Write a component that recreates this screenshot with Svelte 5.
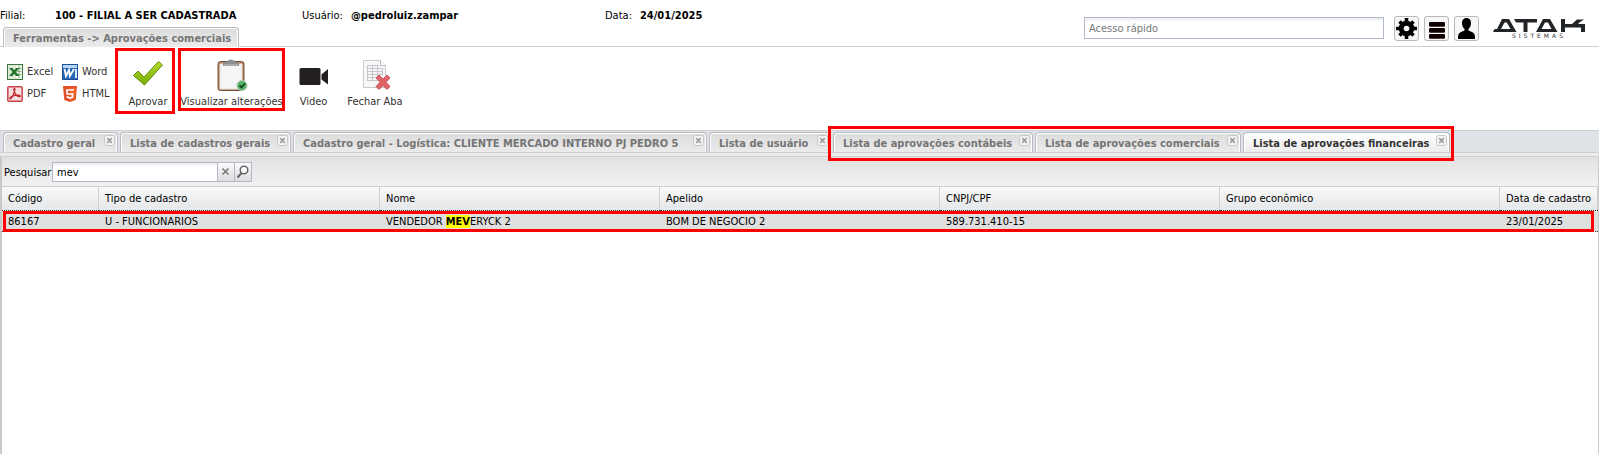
<script>
  const formats = [
    { kind: 'excel', label: 'Excel' },
    { kind: 'word', label: 'Word' },
    { kind: 'pdf', label: 'PDF' },
    { kind: 'html', label: 'HTML' }
  ];

  const tabs = [
    { title: 'Cadastro geral' },
    { title: 'Lista de cadastros gerais' },
    { title: 'Cadastro geral - Logística: CLIENTE MERCADO INTERNO PJ PEDRO 5' },
    { title: 'Lista de usuário' },
    { title: 'Lista de aprovações contábeis' },
    { title: 'Lista de aprovações comerciais' },
    { title: 'Lista de aprovações financeiras' }
  ];
  let active = $state(6);
  let search = $state('mev');
  let quick = $state('');

  const columns = ['Código', 'Tipo de cadastro', 'Nome', 'Apelido', 'CNPJ/CPF', 'Grupo econômico', 'Data de cadastro'];
</script>

{#snippet closeIcon()}
  <svg width="11" height="11" viewBox="0 0 11 11" aria-hidden="true">
    <rect x=".5" y=".5" width="10" height="10" rx="2" fill="#f3f3f3" stroke="#c8c8c8" />
    <path d="M3.2 3.2l4.6 4.6M7.8 3.2L3.2 7.8" stroke="#a0a0a0" stroke-width="1.7" />
  </svg>
{/snippet}

{#snippet formatIcon(kind)}
  <svg width="16" height="16" viewBox="0 0 16 16" aria-hidden="true">
    {#if kind === 'excel'}
      <rect x=".5" y=".5" width="15" height="15" fill="#dcebd6" stroke="#40763f" />
      <path d="M9 2h5v12H9z" fill="#fff" /><path d="M10 4.5h4M10 7.5h4M10 10.500h4M12 2v12" stroke="#7daa78" />
      <path d="M2 4h3.500l1.800 2.300L9 4h3.500L9 8l3.500 4H9L7.200 9.800 5.500 12H2l3.500-4z" fill="#25742c" />
    {:else if kind === 'word'}
      <rect x=".5" y=".5" width="15" height="15" fill="#2568b4" stroke="#1c4f96" />
      <path d="M1 1h14v3H1z" fill="#b8d5f2" /><path d="M13 5h2v9h-2z" fill="#d7e7f8" />
      <path d="M2.500 5l1.500 7 3-6 .8 6L12 5" fill="none" stroke="#fff" stroke-width="1.800" />
    {:else if kind === 'pdf'}
      <rect x=".8" y=".8" width="14.400" height="14.400" rx="1" fill="#f8dedc" stroke="#c9444a" stroke-width="1.500" />
      <path d="M7.500 2.500c-.9 0-.6 2 .2 4 .8 2 2.800 4 4.800 4.200 1.600 0 .6-1.700-1.500-1.600-3 .1-6.500 1.200-7.800 2.500-1.200 1.300.3 1.700 1.500 0C6.500 9.300 8.700 2.500 7.500 2.500z" fill="none" stroke="#c02c32" stroke-width="1.300" />
    {:else}
      <path d="M1 0h14l-1.300 14L8 16l-5.700-2z" fill="#e34f26" /><path d="M8 1.200h5.700l-1.100 12L8 14.700z" fill="#ef652a" />
      <path d="M12 4H4.800l.4 4h5.500l-.3 3.200-2.400.8-2.400-.8-.1-1.200" fill="none" stroke="#fff" stroke-width="1.700" />
    {/if}
  </svg>
{/snippet}

<div class="app">
  <header>
    <dl>
      <div><dt>Filial:</dt><dd>100 - FILIAL A SER CADASTRADA</dd></div>
      <div><dt>Usuário:</dt><dd>@pedroluiz.zampar</dd></div>
      <div><dt>Data:</dt><dd>24/01/2025</dd></div>
    </dl>
    <div class="quick">
      <input type="text" aria-label="Acesso rápido" placeholder="Acesso rápido" bind:value={quick} />
      <button aria-label="Configurações">
        <svg width="21" height="21" viewBox="0 0 21 21">
          <path d="M10.500 0v21M0 10.500h21M3.500 3.500l14 14M17.500 3.500l-14 14" stroke="#000" stroke-width="3.600" />
          <circle cx="10.500" cy="10.500" r="5.300" fill="none" stroke="#000" stroke-width="5" /><circle cx="10.500" cy="10.500" r="2.800" fill="#f7f7f7" />
        </svg>
      </button>
      <button aria-label="Menu">
        <svg width="21" height="21" viewBox="0 0 21 21">
          <g fill="#100000"><rect x="3" y="4" width="16" height="4.800" rx="1.200" /><rect x="3" y="10" width="16" height="4.800" rx="1.200" /><rect x="3" y="16" width="16" height="4.800" rx="1.200" /></g>
        </svg>
      </button>
      <button aria-label="Conta">
        <svg width="21" height="21" viewBox="0 0 21 21">
          <path d="M10.500 0C7.300 0 6 2.400 6 5c0 2.800 1.200 5 2.500 6v1.500C5.500 13.800 2 14.500 2 19v2h17v-2c0-4.500-3.500-5.200-6.500-6.500V11C13.800 10 15 7.800 15 5c0-2.600-1.300-5-4.500-5z" fill="#000" />
        </svg>
      </button>
      <div class="logo">
        <svg width="92" height="13" viewBox="0 0 92 13" role="img" aria-label="Atak">
          <g fill="#222528">
            <path fill-rule="evenodd" d="M9 0h7l7.500 13H0l1.500-3H4zM11.500 3.500L8 10h9.500l-3.700-6.500z" />
            <path d="M21 0h23v3.500h-9.500V13h-4V3.500H23z" />
            <path fill-rule="evenodd" d="M50 0h7l7.500 13H43zM52 3.500L48.500 10h10L55 3.500z" />
            <path d="M68 0h4v5h7l5-4.500h7L87 3l-2 2h7v8h-4V8.500H72V13h-4z" />
          </g>
        </svg>
        <span>SISTEMAS</span>
      </div>
    </div>
  </header>

  <nav class="crumb"><a href="#aprovacoes">Ferramentas -&gt; Aprovações comerciais</a></nav>

  <section class="tools" aria-label="Ferramentas">
    <div class="formats">
      {#each formats as f}
        <button>{@render formatIcon(f.kind)}{f.label}</button>
      {/each}
    </div>
    <button class="tool marked approve">
      <svg width="32" height="32" viewBox="0 0 32 32" aria-hidden="true">
        <defs><linearGradient id="g" x2="0" y2="1"><stop stop-color="#b5dc2b" /><stop offset="1" stop-color="#76ad00" /></linearGradient></defs>
        <path d="M1.500 16.500L6 12l6 6L26.500 2.500 30.500 6 12.500 26z" fill="url(#g)" stroke="#648d16" />
      </svg>
      Aprovar
    </button>
    <button class="tool marked view">
      <svg width="32" height="32" viewBox="0 0 32 32" aria-hidden="true">
        <rect x="2" y="2.500" width="26" height="29" rx="2.500" fill="#b98360" stroke="#71503b" />
        <path d="M4 5h22v25H4z" fill="#f5f5f6" stroke="#dcdcdc" />
        <path d="M7 7V3.500l4-.5c.5-3.500 7.500-3.500 8 0l4 .5V7z" fill="#8b8f90" /><path d="M8 6h14" stroke="#c2c5c6" />
        <circle cx="26" cy="26.500" r="5" fill="#57b267" stroke="#b5c8b8" /><path d="M23.500 26.500l2 2 3.500-4" fill="none" stroke="#12461b" stroke-width="1.800" />
      </svg>
      Visualizar alterações
    </button>
    <button class="tool video">
      <svg width="32" height="32" viewBox="0 0 32 32" aria-hidden="true">
        <rect x="1.500" y="9" width="21" height="17" rx="1.500" fill="#231f20" /><path d="M23.500 15.500L30 10v15.500l-6.500-5z" fill="#231f20" />
      </svg>
      Video
    </button>
    <button class="tool close-tab">
      <svg width="32" height="32" viewBox="0 0 32 32" aria-hidden="true">
        <path d="M4.500 1.500h17l5 5v22h-22z" fill="#f7f7f7" stroke="#cacaca" /><path d="M21.500 1.500v5h5" fill="#fff" stroke="#bbb" />
        <path d="M8 6.500h12M8 9.500h15M8 12.500h15M8 15.500h15M8 18.500h15M8 21.500h10M8.500 6v16M13.500 6v16M18.500 6v16M23.500 9v7" fill="none" stroke="#c3c6ca" />
        <path d="M20 16l4 4 4-4 3 3-4 4.200 4 4.300-3 3-4-4-4 4-3-3 4-4.300-4-4.200z" fill="#de6467" stroke="#c54449" stroke-width=".8" />
      </svg>
      Fechar Aba
    </button>
  </section>

  <div class="tabbar">
    <div class="tabs" role="tablist">
      {#each tabs as tab, i}
        <div class="tab" class:active={i === active}>
          <button role="tab" aria-selected={i === active} onclick={() => (active = i)}>{tab.title}</button>
          <button class="close" aria-label="Fechar {tab.title}">{@render closeIcon()}</button>
        </div>
      {/each}
      <span class="group"></span>
    </div>
  </div>

  <main>
    <form class="search" onsubmit={(e) => e.preventDefault()}>
      <label for="q">Pesquisar</label>
      <input id="q" type="text" bind:value={search} />
      <button type="button" aria-label="Limpar" onclick={() => (search = '')}>
        <svg width="16" height="18" viewBox="0 0 16 18"><path d="M4.500 5.500l6 6M10.500 5.500l-6 6" stroke="#777" stroke-width="1.600" /></svg>
      </button>
      <button aria-label="Buscar">
        <svg width="16" height="18" viewBox="0 0 16 18"><circle cx="9" cy="7" r="3.800" fill="#f8f8f8" stroke="#666" stroke-width="1.500" /><path d="M6.500 10L2.500 14.500" stroke="#666" stroke-width="2" /></svg>
      </button>
    </form>
    <div class="grid">
      <table>
        <colgroup><col class="code" /><col class="kind" /><col /><col /><col /><col /><col class="date" /></colgroup>
        <thead><tr>{#each columns as c}<th scope="col">{c}</th>{/each}</tr></thead>
        <tbody>
          <tr>
            <td>86167</td><td>U - FUNCIONARIOS</td><td>VENDEDOR <mark>MEV</mark>ERYCK 2</td><td>BOM DE NEGOCIO 2</td>
            <td>589.731.410-15</td><td></td><td>23/01/2025</td>
          </tr>
        </tbody>
      </table>
      <span class="rowmark"></span>
    </div>
  </main>
</div>

<style>
  :global(body) { background: #fff; }
  .app, .app * { box-sizing: border-box; }
  .app {
    display: flex; flex-direction: column; min-height: 100vh; overflow: hidden;
    font: 11px/14px "DejaVu Sans Condensed", Tahoma, "DejaVu Sans", sans-serif; color: #000;
  }
  button { font: inherit; color: inherit; background: none; border: 0; padding: 0; margin: 0; cursor: pointer; }
  input { font: inherit; border: 1px solid #b5b8c8; margin: 0; padding: 0 4px; background: linear-gradient(#e9eced, #fff 4px); }
  svg { display: block; flex: none; }

  header { display: flex; justify-content: space-between; height: 27px; }
  dl { display: grid; grid-template-columns: 302px 303px auto; margin: 9px 0 0; }
  dl div { display: flex; gap: 8px; white-space: nowrap; }
  dl div:first-child dt { width: 47px; }
  dd { margin: 0; font-weight: bold; }
  .quick { display: flex; gap: 5px; padding: 16px 14px 0 0; align-items: flex-start; }
  .quick input { width: 300px; height: 22px; margin: 1px 5px 0 0; }
  .quick input::placeholder { color: #777; opacity: 1; }
  .quick button { width: 25px; height: 25px; border: 1px solid #b9b9b9; border-radius: 3px; background: #f7f7f7; display: grid; place-items: center; }
  .logo { display: flex; flex-direction: column; align-items: center; width: 92px; margin: 3px 0 0 9px; gap: 1px; }
  .logo span { font: 6px/6px "DejaVu Sans", sans-serif; color: #333; letter-spacing: 3px; }

  .crumb { height: 20px; padding-left: 3px; border-bottom: 1px solid #d0d0d0; }
  .crumb a, .tab {
    border: 1px solid #b8bcc0; border-bottom: 0; border-radius: 4px 4px 0 0; box-shadow: inset 1px 1px #fff, inset -1px 0 #fff;
    background: linear-gradient(#dcdcdc, #ebebeb); color: #757575; font-weight: bold; white-space: nowrap;
  }
  .crumb a { display: inline-block; height: 20px; padding: 4px 7px 0 9px; text-decoration: none; }

  .tools { display: flex; height: 83px; align-items: flex-start; color: #333; }
  .formats { display: grid; grid-template-columns: 55px 53px; gap: 6px 0; padding: 17px 0 0 7px; }
  .formats button { display: flex; align-items: center; gap: 4px; height: 16px; }
  .tool { position: relative; display: flex; flex-direction: column; align-items: center; gap: 4px; padding-top: 12px; white-space: nowrap; height: 66px; }
  .marked { border: 3px solid #f00; padding-top: 8px; margin-top: 1px; }
  .approve { width: 60px; margin-right: 3px; padding-left: 6px; }
  .view { width: 107px; height: 63px; }
  .video { width: 57px; }
  .close-tab { width: 66px; }

  .tabbar { height: 27px; padding: 1px 3px 0; border: solid #d0d0d0; border-width: 1px 0; background: linear-gradient(#dfe3e8 21px, #cfcfcf 21px, #cfcfcf 22px, #ebebeb 22px); }
  .tabs { position: relative; display: grid; grid-template-columns: 115px 171px 414px 122px 200px 206px 207px; gap: 2px; width: max-content; }
  .tab { display: flex; justify-content: space-between; height: 20px; padding: 0 2px 0 9px; align-items: flex-start; }
  .tab button:first-child { padding-top: 4px; font-weight: bold; }
  .tab .close { padding-top: 2px; }
  .active { background: linear-gradient(#fff, #ededed); color: #333; }
  .group { position: absolute; left: 825px; right: -4px; top: -6px; height: 35px; border: 3px solid #f00; }

  main { flex: 1; border: solid #c9c9c9; border-width: 0 1px 0 2px; }
  .search { display: flex; height: 29px; padding: 5px 2px; background: linear-gradient(#e2e2e2, #f1f1f1); }
  .search label { width: 48px; padding-top: 4px; }
  .search input { width: 166px; height: 20px; }
  .search button { width: 17px; height: 20px; border: 1px solid #b5b8c8; border-left: 0; background: linear-gradient(#fafafa, #ddd); }
  .grid { position: relative; }
  table { width: 100%; table-layout: fixed; border-collapse: separate; border-spacing: 0; }
  .code { width: 97px; } .kind { width: 281px; } .date { width: 98px; }
  th { height: 24px; padding: 0 6px; text-align: left; font-weight: normal; white-space: nowrap; border: solid #d0d0d0; border-width: 1px 1px 0 0; background: linear-gradient(#f9f9f9, #e4e6e8); }
  td { height: 22px; padding: 2px 6px 0; border: dotted #333; border-width: 1px 0; background: #dfdfdf; white-space: nowrap; }
  mark { background: #ff0; font-weight: bold; }
  .rowmark { position: absolute; inset: 25px 4px 0 1px; border: 3px solid #f00; }
</style>
